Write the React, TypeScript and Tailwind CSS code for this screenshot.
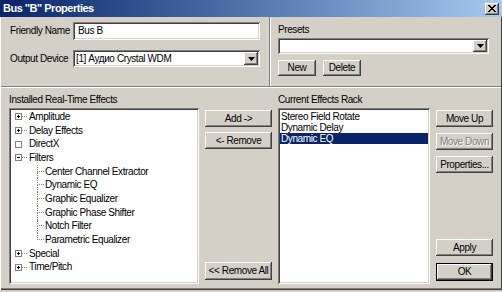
import React from "react";

const raised =
  "shadow-[inset_-1px_-1px_#404040,inset_1px_1px_#ffffff,inset_-2px_-2px_#808080,inset_2px_2px_#d4d0c8]";
const sunken =
  "shadow-[inset_1px_1px_#808080,inset_-1px_-1px_#ffffff,inset_2px_2px_#404040,inset_-2px_-2px_#d4d0c8]";

function Button({
  label,
  className = "",
  disabled = false,
  isDefault = false,
}: {
  label: string;
  className?: string;
  disabled?: boolean;
  isDefault?: boolean;
}) {
  if (isDefault) {
    return (
      <div className={`border border-black bg-[#d4d0c8] ${className}`}>
        <div
          className={`h-full w-full flex items-center justify-center ${raised}`}
        >
          {label}
        </div>
      </div>
    );
  }
  return (
    <div
      className={`flex items-center justify-center bg-[#d4d0c8] whitespace-nowrap ${raised} ${className} ${
        disabled ? "text-[#808080] [text-shadow:1px_1px_0_#ffffff]" : ""
      }`}
    >
      {label}
    </div>
  );
}

function Select({ text, className = "" }: { text: string; className?: string }) {
  return (
    <div className={`bg-white ${sunken} flex items-stretch p-[2px] ${className}`}>
      <div className="flex-1 flex items-center pl-[1px] whitespace-nowrap overflow-hidden">
        {text}
      </div>
      <div className={`w-[14px] bg-[#d4d0c8] ${raised} flex items-center justify-center`}>
        <svg width="7" height="4" viewBox="0 0 7 4">
          <path d="M0 0h7L3.5 4z" fill="#000" />
        </svg>
      </div>
    </div>
  );
}

type Node = {
  label: string;
  kind?: "plus" | "minus" | "empty";
  child?: boolean;
  last?: boolean;
};

const tree: Node[] = [
  { label: "Amplitude", kind: "plus" },
  { label: "Delay Effects", kind: "plus" },
  { label: "DirectX", kind: "empty" },
  { label: "Filters", kind: "minus" },
  { label: "Center Channel Extractor", child: true },
  { label: "Dynamic EQ", child: true },
  { label: "Graphic Equalizer", child: true },
  { label: "Graphic Phase Shifter", child: true },
  { label: "Notch Filter", child: true },
  { label: "Parametric Equalizer", child: true, last: true },
  { label: "Special", kind: "plus" },
  { label: "Time/Pitch", kind: "plus" },
];

function TreeRow({ node }: { node: Node }) {
  if (node.child) {
    return (
      <div className="flex items-stretch h-[13.7px]">
        <div className="w-[26px] shrink-0" />
        <div className="w-[7px] shrink-0 flex flex-col">
          <div className="h-1/2 border-l border-b border-dotted border-[#808080]" />
          <div
            className={`flex-1 ${node.last ? "" : "border-l border-dotted border-[#808080]"}`}
          />
        </div>
        <div className="ml-[1px] flex items-center whitespace-nowrap">{node.label}</div>
      </div>
    );
  }
  return (
    <div className="flex items-center h-[13.7px]">
      <div className="w-[4px] shrink-0" />
      <div className="w-[7px] h-[7px] shrink-0 border border-[#808080] bg-white flex items-center justify-center">
        {node.kind !== "empty" && (
          <svg width="5" height="5" viewBox="0 0 5 5" shapeRendering="crispEdges">
            <path d="M1 2.5h3" stroke="#000" strokeWidth="1" />
            {node.kind === "plus" && <path d="M2.5 1v3" stroke="#000" strokeWidth="1" />}
          </svg>
        )}
      </div>
      {node.kind !== "empty" ? (
        <div className="w-[5px] shrink-0 border-t border-dotted border-[#808080]" />
      ) : (
        <div className="w-[5px] shrink-0" />
      )}
      <span className="ml-[2px] whitespace-nowrap">{node.label}</span>
    </div>
  );
}

export default function App() {
  return (
    <div className="w-[502px] h-[292px] bg-[#d4d0c8] flex flex-col overflow-hidden font-['Liberation_Sans',Arial,sans-serif] text-[10px] tracking-[-0.4px] text-black leading-none">
      {/* Title bar */}
      <div className="h-[17px] shrink-0 flex items-center justify-between pl-[3px] pr-[3px] bg-linear-to-r from-[#0a246a] to-[#a6caf0]">
        <span className="text-white font-bold text-[11px] tracking-[-0.5px]">
          Bus "B" Properties
        </span>
        <div className={`w-[14px] h-[12px] bg-[#d4d0c8] ${raised} flex items-center justify-center`}>
          <svg width="8" height="7" viewBox="0 0 8 7" shapeRendering="crispEdges">
            <path d="M0 0h2l2 2.5L6 0h2L5 3.5 8 7H6L4 4.5 2 7H0l3-3.5z" fill="#000" />
          </svg>
        </div>
      </div>

      <div className="flex-1 flex flex-col border-l border-l-white border-r border-r-[#404040]">
        {/* Top section */}
        <div className="h-[69px] shrink-0 flex">
          <div className="w-[268px] shrink-0 pl-[9px] pt-[5px] flex flex-col gap-[10px]">
            <div className="flex items-center h-[18px]">
              <div className="w-[63px] shrink-0 whitespace-nowrap">Friendly Name</div>
              <div className={`w-[187px] h-[18px] bg-white ${sunken} flex items-center pl-[5px]`}>
                Bus B
              </div>
            </div>
            <div className="flex items-center h-[17px]">
              <div className="w-[63px] shrink-0 whitespace-nowrap">Output Device</div>
              <Select text="[1] Аудио Crystal WDM" className="w-[187px] h-[17px]" />
            </div>
          </div>
          <div className="w-[2px] shrink-0 border-l border-l-[#808080] border-r border-r-white" />
          <div className="flex-1 pl-[7px] pt-[7px] flex flex-col">
            <div className="h-[12px] flex items-center">Presets</div>
            <Select text="" className="mt-[2px] w-[211px] h-[16px]" />
            <div className="flex gap-[7px] mt-[6px]">
              <Button label="New" className="w-[38px] h-[16px]" />
              <Button label="Delete" className="w-[38px] h-[16px]" />
            </div>
          </div>
        </div>
        <div className="h-[2px] shrink-0 border-t border-t-[#808080] border-b border-b-white" />

        {/* Lower section */}
        <div className="flex-1 flex gap-[6px] px-[8px] pt-[6px] pb-[4px]">
          <div className="w-[190px] shrink-0 flex flex-col">
            <div className="h-[12px] flex items-center whitespace-nowrap">
              Installed Real-Time Effects
            </div>
            <div className={`mt-[2px] flex-1 bg-white ${sunken} p-[2px] overflow-hidden`}>
              {tree.map((n) => (
                <TreeRow key={n.label} node={n} />
              ))}
            </div>
          </div>

          <div className="w-[67px] shrink-0 flex flex-col">
            <Button label="Add ->" className="mt-[16px] h-[17px]" />
            <Button label="<- Remove" className="mt-[5px] h-[17px]" />
            <Button label="<< Remove All" className="mt-auto mb-[4px] h-[18px]" />
          </div>

          <div className="w-[152px] shrink-0 flex flex-col">
            <div className="h-[12px] flex items-center whitespace-nowrap">
              Current Effects Rack
            </div>
            <div className={`mt-[2px] flex-1 bg-white ${sunken} px-[2px] pt-[3px] pb-[2px] overflow-hidden`}>
              <div className="h-[11px] flex items-center pl-[1px] whitespace-nowrap">
                Stereo Field Rotate
              </div>
              <div className="h-[11px] flex items-center pl-[1px] whitespace-nowrap">
                Dynamic Delay
              </div>
              <div className="h-[11px] flex items-center pl-[1px] whitespace-nowrap bg-[#0a246a] text-white">
                Dynamic EQ
              </div>
            </div>
          </div>

          <div className="w-[57px] shrink-0 flex flex-col">
            <Button label="Move Up" className="mt-[16px] h-[17px]" />
            <Button label="Move Down" disabled className="mt-[6px] h-[17px]" />
            <Button label="Properties..." className="mt-[6px] h-[17px]" />
            <Button label="Apply" className="mt-auto h-[17px]" />
            <Button label="OK" isDefault className="mt-[7px] mb-[3px] h-[18px]" />
          </div>
        </div>
        <div className="h-[2px] shrink-0 border-t border-t-[#808080] border-b border-b-[#404040]" />
      </div>
      <div className="h-[2px] shrink-0" />
    </div>
  );
}
